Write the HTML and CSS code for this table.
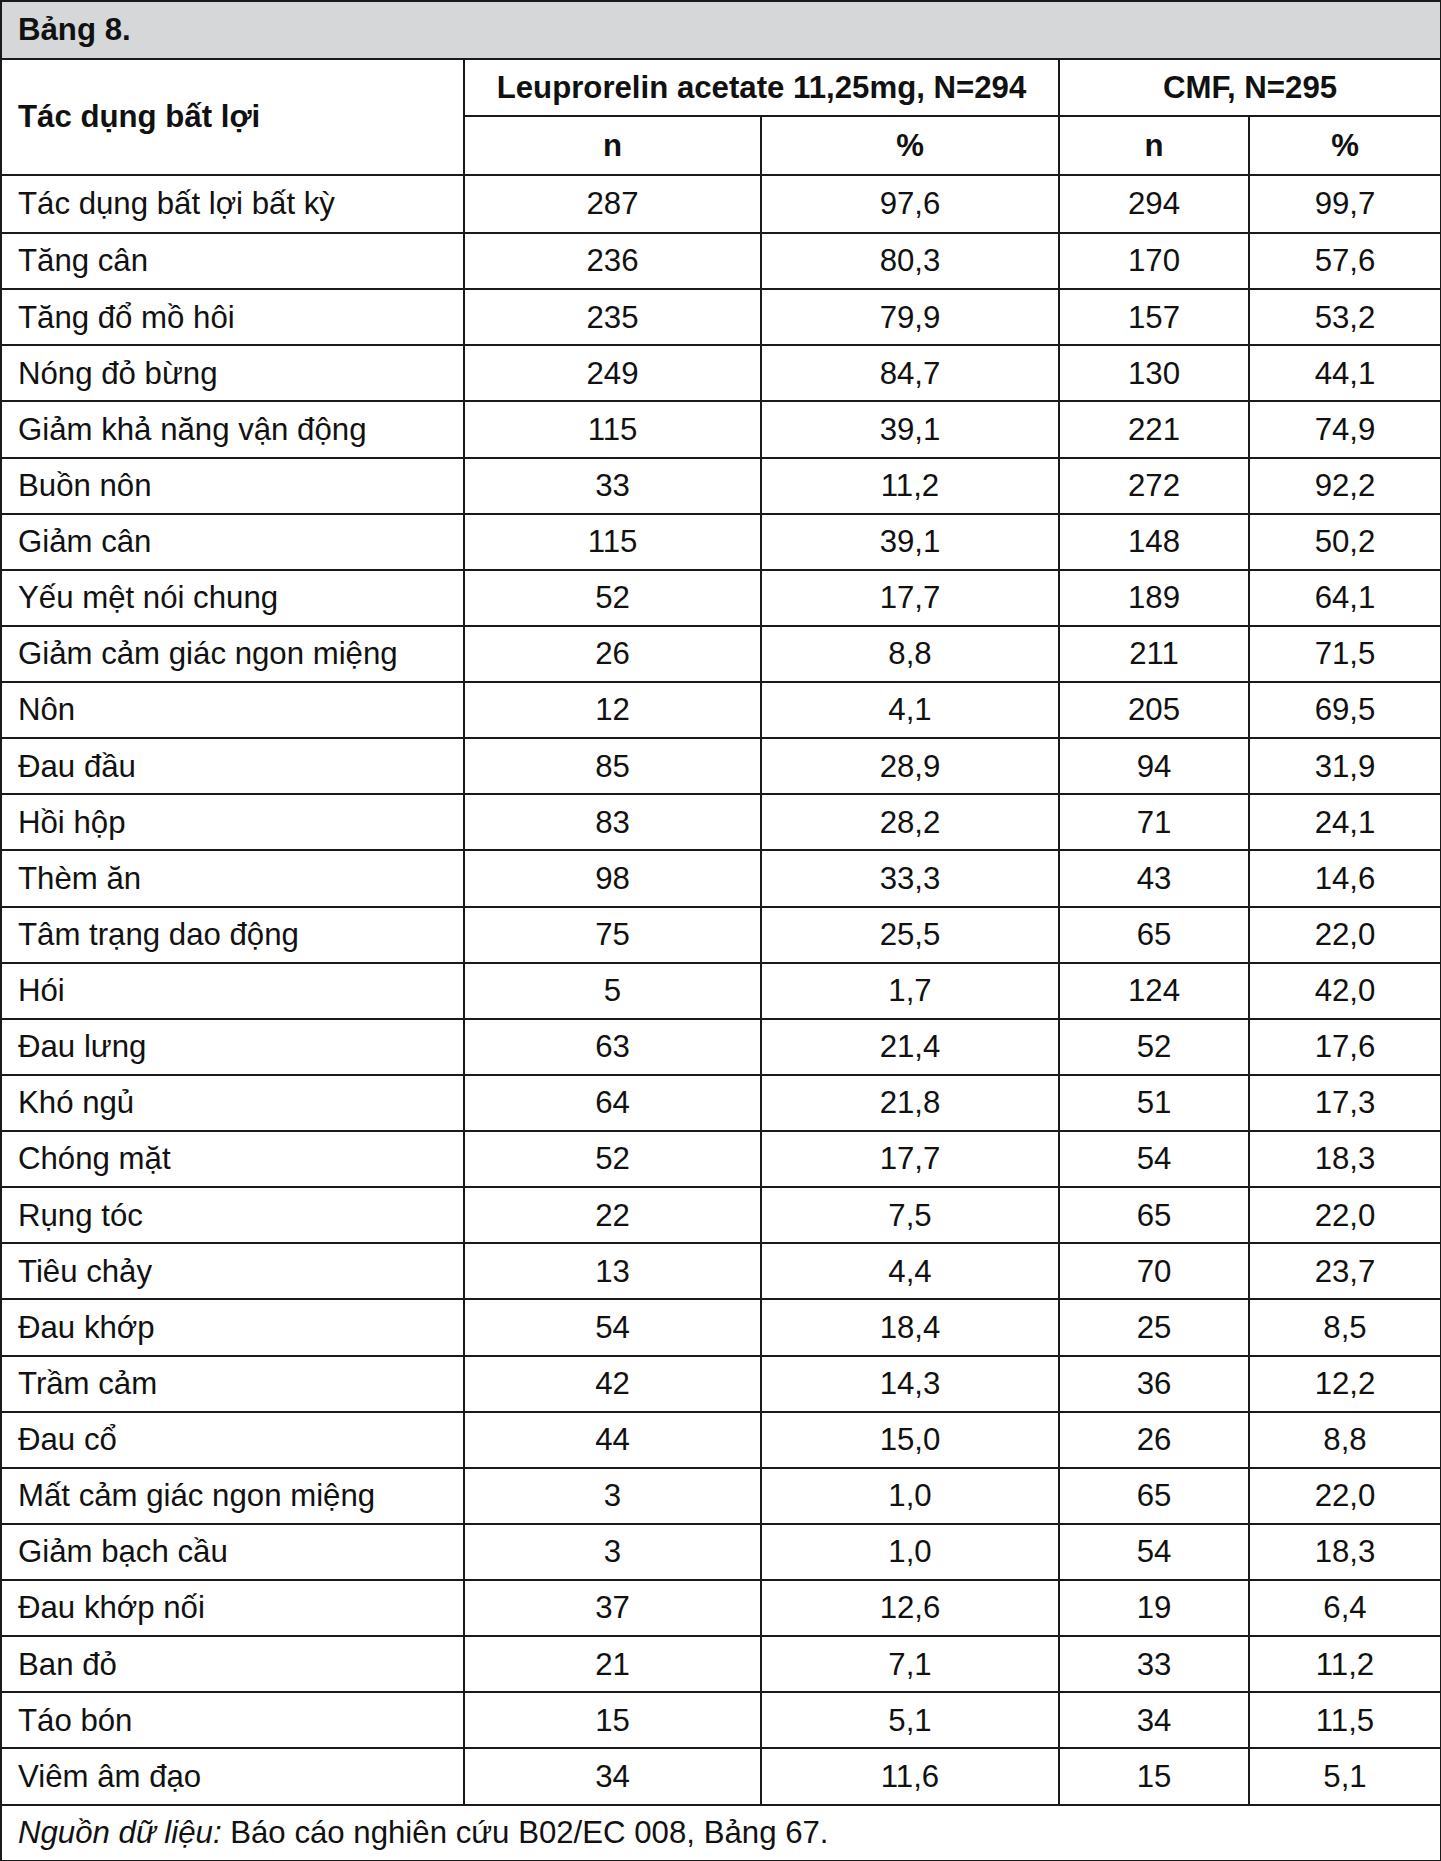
FILE: index.html
```html
<!DOCTYPE html>
<html lang="vi">
<head>
<meta charset="utf-8">
<title>Bảng 8</title>
<link rel="stylesheet" href="styles.css">
</head>
<body>
<table class="tbl">
  <colgroup>
    <col class="c1"><col class="c2"><col class="c3"><col class="c4"><col class="c5">
  </colgroup>
  <thead>
    <tr class="title-row"><th colspan="5" class="title">Bảng 8.</th></tr>
    <tr class="h1">
      <th rowspan="2" class="left">Tác dụng bất lợi</th>
      <th colspan="2">Leuprorelin acetate 11,25mg, N=294</th>
      <th colspan="2">CMF, N=295</th>
    </tr>
    <tr class="h2"><th>n</th><th>%</th><th>n</th><th>%</th></tr>
  </thead>
  <tbody>
    <tr class="first"><td class="left">Tác dụng bất lợi bất kỳ</td><td>287</td><td>97,6</td><td>294</td><td>99,7</td></tr>
    <tr><td class="left">Tăng cân</td><td>236</td><td>80,3</td><td>170</td><td>57,6</td></tr>
    <tr><td class="left">Tăng đổ mồ hôi</td><td>235</td><td>79,9</td><td>157</td><td>53,2</td></tr>
    <tr><td class="left">Nóng đỏ bừng</td><td>249</td><td>84,7</td><td>130</td><td>44,1</td></tr>
    <tr><td class="left">Giảm khả năng vận động</td><td>115</td><td>39,1</td><td>221</td><td>74,9</td></tr>
    <tr><td class="left">Buồn nôn</td><td>33</td><td>11,2</td><td>272</td><td>92,2</td></tr>
    <tr><td class="left">Giảm cân</td><td>115</td><td>39,1</td><td>148</td><td>50,2</td></tr>
    <tr><td class="left">Yếu mệt nói chung</td><td>52</td><td>17,7</td><td>189</td><td>64,1</td></tr>
    <tr><td class="left">Giảm cảm giác ngon miệng</td><td>26</td><td>8,8</td><td>211</td><td>71,5</td></tr>
    <tr><td class="left">Nôn</td><td>12</td><td>4,1</td><td>205</td><td>69,5</td></tr>
    <tr><td class="left">Đau đầu</td><td>85</td><td>28,9</td><td>94</td><td>31,9</td></tr>
    <tr><td class="left">Hồi hộp</td><td>83</td><td>28,2</td><td>71</td><td>24,1</td></tr>
    <tr><td class="left">Thèm ăn</td><td>98</td><td>33,3</td><td>43</td><td>14,6</td></tr>
    <tr><td class="left">Tâm trạng dao động</td><td>75</td><td>25,5</td><td>65</td><td>22,0</td></tr>
    <tr><td class="left">Hói</td><td>5</td><td>1,7</td><td>124</td><td>42,0</td></tr>
    <tr><td class="left">Đau lưng</td><td>63</td><td>21,4</td><td>52</td><td>17,6</td></tr>
    <tr><td class="left">Khó ngủ</td><td>64</td><td>21,8</td><td>51</td><td>17,3</td></tr>
    <tr><td class="left">Chóng mặt</td><td>52</td><td>17,7</td><td>54</td><td>18,3</td></tr>
    <tr><td class="left">Rụng tóc</td><td>22</td><td>7,5</td><td>65</td><td>22,0</td></tr>
    <tr><td class="left">Tiêu chảy</td><td>13</td><td>4,4</td><td>70</td><td>23,7</td></tr>
    <tr><td class="left">Đau khớp</td><td>54</td><td>18,4</td><td>25</td><td>8,5</td></tr>
    <tr><td class="left">Trầm cảm</td><td>42</td><td>14,3</td><td>36</td><td>12,2</td></tr>
    <tr><td class="left">Đau cổ</td><td>44</td><td>15,0</td><td>26</td><td>8,8</td></tr>
    <tr><td class="left">Mất cảm giác ngon miệng</td><td>3</td><td>1,0</td><td>65</td><td>22,0</td></tr>
    <tr><td class="left">Giảm bạch cầu</td><td>3</td><td>1,0</td><td>54</td><td>18,3</td></tr>
    <tr><td class="left">Đau khớp nối</td><td>37</td><td>12,6</td><td>19</td><td>6,4</td></tr>
    <tr><td class="left">Ban đỏ</td><td>21</td><td>7,1</td><td>33</td><td>11,2</td></tr>
    <tr><td class="left">Táo bón</td><td>15</td><td>5,1</td><td>34</td><td>11,5</td></tr>
    <tr><td class="left">Viêm âm đạo</td><td>34</td><td>11,6</td><td>15</td><td>5,1</td></tr>
  </tbody>
  <tfoot>
    <tr class="foot-row"><td colspan="5" class="left foot"><em>Nguồn dữ liệu:</em> Báo cáo nghiên cứu B02/EC 008, Bảng 67.</td></tr>
  </tfoot>
</table>
</body>
</html>
```
FILE: styles.css
```css
html, body {
  margin: 0;
  padding: 0;
  background: #ffffff;
}

.tbl {
  width: 1440px;
  border-collapse: collapse;
  table-layout: fixed;
  border: 2px solid #111;
  font-family: "Liberation Sans", Arial, sans-serif;
  font-size: 31.2px;
  color: #111;
}

.c1 { width: 463px; }
.c2 { width: 297px; }
.c3 { width: 298px; }
.c4 { width: 190px; }
.c5 { width: 192px; }

.tbl th,
.tbl td {
  border: 2px solid #1a1a1a;
  padding: 0 8px;
  text-align: center;
  vertical-align: middle;
  line-height: 1;
}

.tbl th {
  font-weight: bold;
}

.tbl .left {
  text-align: left;
  padding-left: 16px;
}

.title-row { height: 58px; }

.tbl .title {
  background: #d6d7d9;
  text-align: left;
  padding-left: 16px;
}

.h1 { height: 57px; }
.h2 { height: 59px; }

.tbl tbody tr { height: 56.14px; }
.tbl tbody tr.first { height: 58px; }

.foot-row { height: 56px; }

.foot em {
  font-style: italic;
}
```
